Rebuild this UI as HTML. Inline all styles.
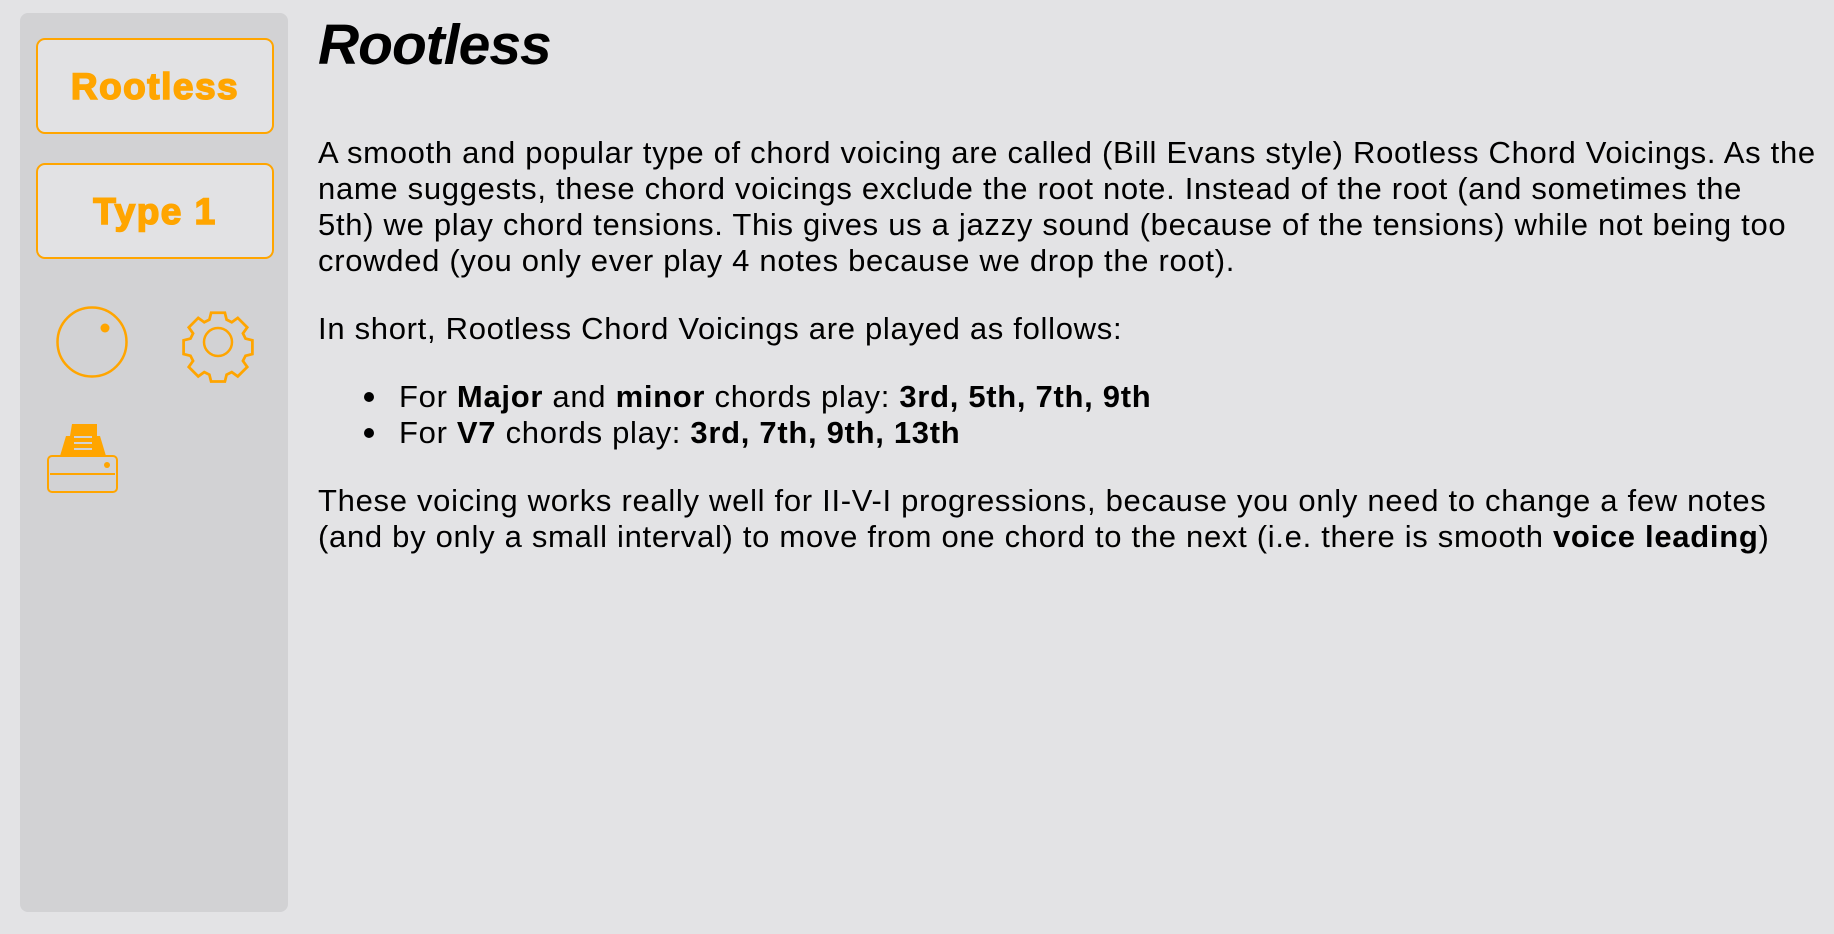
<!DOCTYPE html>
<html><head><meta charset="utf-8"><style>
html,body{margin:0;padding:0}
body{width:1834px;height:934px;background:#e3e3e5;position:relative;overflow:hidden;font-family:"Liberation Sans",sans-serif;color:#000}
.panel{position:absolute;left:20px;top:13px;width:268px;height:899px;background:#d2d2d4;border-radius:8px}
.btn{position:absolute;left:36px;width:238px;height:96px;border:2px solid #ffa500;border-radius:9px;background:#e2e2e4;color:#ffa500;font-weight:bold;font-size:37px;-webkit-text-stroke:1.6px #ffa500;letter-spacing:1.5px;display:flex;align-items:center;justify-content:center;padding-top:2px;box-sizing:border-box}
h1{position:absolute;left:318px;top:12px;margin:0;font-size:57px;font-style:italic;font-weight:bold;letter-spacing:-1px}
.l{position:absolute;left:318px;white-space:nowrap;font-size:31px;letter-spacing:0.7px;line-height:36px}
.dot{position:absolute;left:364px;width:10px;height:10px;border-radius:50%;background:#000}
</style></head><body>
<div class="panel"></div>
<div class="btn" style="top:38px">Rootless</div>
<div class="btn" style="top:163px">Type 1</div>
<svg style="position:absolute;left:0;top:0" width="300" height="520">
<g fill="none" stroke="#ffa500" stroke-width="2.5">
<circle cx="92" cy="342" r="34.5"/>
<circle cx="218" cy="342" r="14"/>
<g transform="translate(218 342) scale(0.86) translate(-218 -342)">
<path d="M210,308 h16 l2,8 l6,3 l7,-5 l11,11 l-5,7 l3,6 l8,2 v16 l-8,2 l-3,6 l5,7 l-11,11 l-7,-5 l-6,3 l-2,8 h-16 l-2,-8 l-6,-3 l-7,5 l-11,-11 l5,-7 l-3,-6 l-8,-2 v-16 l8,-2 l3,-6 l-5,-7 l11,-11 l7,5 l6,-3 z" stroke-width="3.2"/>
</g>
<rect x="48" y="456" width="69" height="36" rx="4" stroke-width="2"/>
<line x1="50" y1="474" x2="115" y2="474" stroke-width="2"/>
</g>
<circle cx="105" cy="328" r="4.5" fill="#ffa500"/>
<circle cx="107" cy="465" r="3" fill="#ffa500"/>
<path d="M60,456 L66,436 L70,436 L72,424 L97,424 L97,436 L100,436 L106,456 Z" fill="#ffa500"/>
<g stroke="#d2d2d4" stroke-width="2"><line x1="74" y1="437" x2="92" y2="437"/><line x1="74" y1="443" x2="92" y2="443"/><line x1="74" y1="449" x2="92" y2="449"/></g>
</svg>
<h1>Rootless</h1>
<div class="l" style="top:135px">A smooth and popular type of chord voicing are called (Bill Evans style) Rootless Chord Voicings. As the</div>
<div class="l" style="top:171px">name suggests, these chord voicings exclude the root note. Instead of the root (and sometimes the</div>
<div class="l" style="top:207px">5th) we play chord tensions. This gives us a jazzy sound (because of the tensions) while not being too</div>
<div class="l" style="top:243px">crowded (you only ever play 4 notes because we drop the root).</div>
<div class="l" style="top:311px">In short, Rootless Chord Voicings are played as follows:</div>
<div class="dot" style="top:392px"></div>
<div class="l" style="top:379px;left:399px">For <b>Major</b> and <b>minor</b> chords play: <b>3rd, 5th, 7th, 9th</b></div>
<div class="dot" style="top:428px"></div>
<div class="l" style="top:415px;left:399px">For <b>V7</b> chords play: <b>3rd, 7th, 9th, 13th</b></div>
<div class="l" style="top:483px">These voicing works really well for II-V-I progressions, because you only need to change a few notes</div>
<div class="l" style="top:519px">(and by only a small interval) to move from one chord to the next (i.e. there is smooth <b>voice leading</b>)</div>
</body></html>
